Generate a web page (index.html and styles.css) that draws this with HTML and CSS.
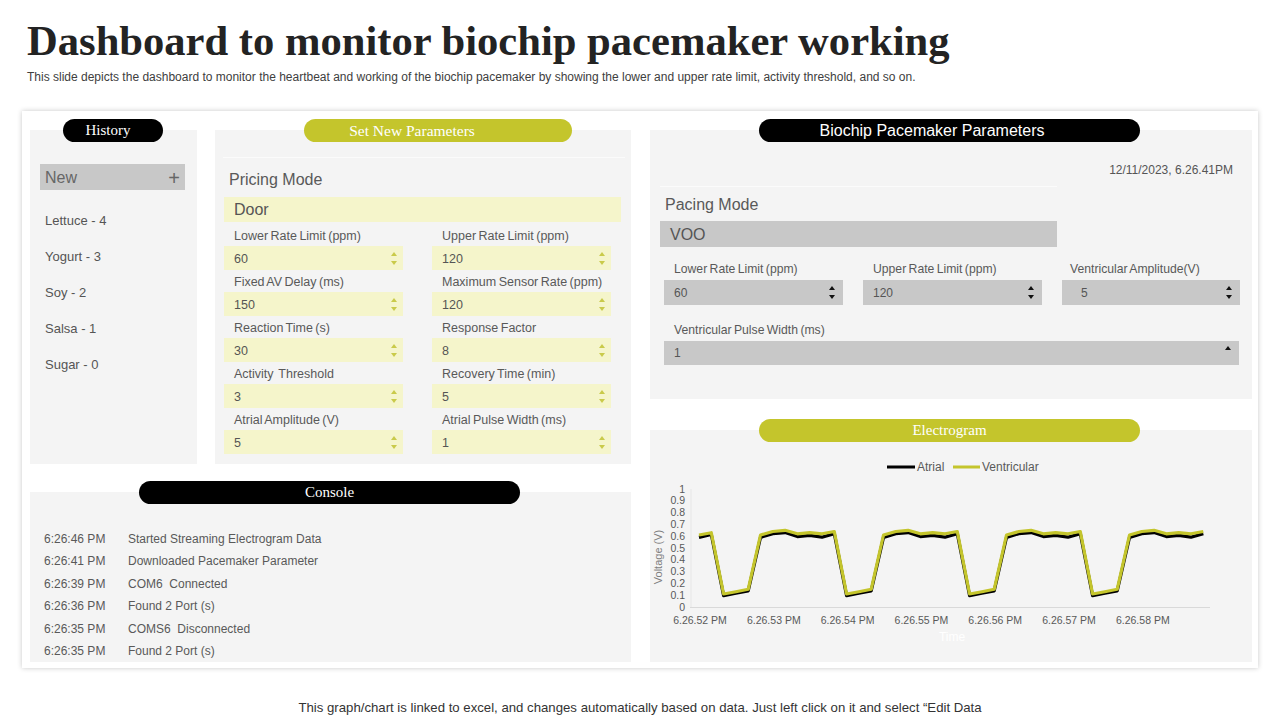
FILE: index.html
```html
<!DOCTYPE html>
<html lang="en">
<head>
<meta charset="utf-8">
<title>Dashboard to monitor biochip pacemaker working</title>
<link rel="stylesheet" href="styles.css">
</head>
<body>
<header class="head">
  <h1 class="title">Dashboard to monitor biochip pacemaker working</h1>
  <p class="subtitle">This slide depicts the dashboard to monitor the heartbeat and working of the biochip pacemaker by showing the lower and upper rate limit, activity threshold, and so on.</p>
</header>

<main class="frame">
  <div class="col-left">
    <div class="row-top">
      <section class="panel history">
        <div class="pill pill-dark pill-history">History</div>
        <div class="new-bar"><span>New</span><span class="plus">+</span></div>
        <ul class="hist-list">
          <li>Lettuce - 4</li>
          <li>Yogurt - 3</li>
          <li>Soy - 2</li>
          <li>Salsa - 1</li>
          <li>Sugar - 0</li>
        </ul>
      </section>

      <section class="panel setnew">
        <div class="pill pill-olive pill-setnew">Set New Parameters</div>
        <div class="divider divider-setnew"></div>
        <div class="mode-label">Pricing Mode</div>
        <div class="mode-bar mode-yellow">Door</div>
        <div class="fields">
          <div class="field"><div class="flabel">Lower Rate Limit (ppm)</div><div class="fbox"><span>60</span><span class="spin"><i class="up"></i><i class="down"></i></span></div></div>
          <div class="field"><div class="flabel">Upper Rate Limit (ppm)</div><div class="fbox"><span>120</span><span class="spin"><i class="up"></i><i class="down"></i></span></div></div>
          <div class="field"><div class="flabel">Fixed AV Delay (ms)</div><div class="fbox"><span>150</span><span class="spin"><i class="up"></i><i class="down"></i></span></div></div>
          <div class="field"><div class="flabel">Maximum Sensor Rate (ppm)</div><div class="fbox"><span>120</span><span class="spin"><i class="up"></i><i class="down"></i></span></div></div>
          <div class="field"><div class="flabel">Reaction Time (s)</div><div class="fbox"><span>30</span><span class="spin"><i class="up"></i><i class="down"></i></span></div></div>
          <div class="field"><div class="flabel">Response Factor</div><div class="fbox"><span>8</span><span class="spin"><i class="up"></i><i class="down"></i></span></div></div>
          <div class="field"><div class="flabel">Activity&nbsp; Threshold</div><div class="fbox"><span>3</span><span class="spin"><i class="up"></i><i class="down"></i></span></div></div>
          <div class="field"><div class="flabel">Recovery Time (min)</div><div class="fbox"><span>5</span><span class="spin"><i class="up"></i><i class="down"></i></span></div></div>
          <div class="field"><div class="flabel">Atrial Amplitude (V)</div><div class="fbox"><span>5</span><span class="spin"><i class="up"></i><i class="down"></i></span></div></div>
          <div class="field"><div class="flabel">Atrial Pulse Width (ms)</div><div class="fbox"><span>1</span><span class="spin"><i class="up"></i><i class="down"></i></span></div></div>
        </div>
      </section>
    </div>

    <section class="panel console">
      <div class="pill pill-dark pill-wide">Console</div>
      <div class="log">
        <div class="log-row"><span class="log-time">6:26:46 PM</span><span>Started Streaming Electrogram Data</span></div>
        <div class="log-row"><span class="log-time">6:26:41 PM</span><span>Downloaded Pacemaker Parameter</span></div>
        <div class="log-row"><span class="log-time">6:26:39 PM</span><span>COM6&nbsp; Connected</span></div>
        <div class="log-row"><span class="log-time">6:26:36 PM</span><span>Found 2 Port (s)</span></div>
        <div class="log-row"><span class="log-time">6:26:35 PM</span><span>COMS6&nbsp; Disconnected</span></div>
        <div class="log-row"><span class="log-time">6:26:35 PM</span><span>Found 2 Port (s)</span></div>
      </div>
    </section>
  </div>

  <div class="col-right">
    <section class="panel biochip">
      <div class="pill pill-dark pill-wide pill-sans">Biochip Pacemaker Parameters</div>
      <div class="date">12/11/2023, 6.26.41PM</div>
      <div class="divider divider-bio"></div>
      <div class="mode-label mode-label-bio">Pacing Mode</div>
      <div class="mode-bar mode-gray">VOO</div>
      <div class="bfields">
        <div class="field"><div class="flabel">Lower Rate Limit (ppm)</div><div class="fbox gbox"><span>60</span><span class="spin spin-dark"><i class="up"></i><i class="down"></i></span></div></div>
        <div class="field"><div class="flabel">Upper Rate Limit (ppm)</div><div class="fbox gbox"><span>120</span><span class="spin spin-dark"><i class="up"></i><i class="down"></i></span></div></div>
        <div class="field field-amp"><div class="flabel">Ventricular Amplitude(V)</div><div class="fbox gbox"><span class="amp-val">5</span><span class="spin spin-dark"><i class="up"></i><i class="down"></i></span></div></div>
      </div>
      <div class="field field-full">
        <div class="flabel">Ventricular Pulse Width (ms)</div>
        <div class="fbox gbox fbox-tall"><span>1</span><span class="spin spin-dark"><i class="up"></i></span></div>
      </div>
    </section>

    <section class="panel electro">
      <div class="pill pill-olive pill-wide">Electrogram</div>
      <svg class="chart" width="602" height="220" viewBox="0 0 602 220">
        <line x1="237" y1="25" x2="265" y2="25" stroke="#000" stroke-width="3"/>
        <text x="267" y="29" class="lg">Atrial</text>
        <line x1="303" y1="25" x2="330" y2="25" stroke="#c4c52c" stroke-width="3"/>
        <text x="332" y="29" class="lg">Ventricular</text>

        <text x="35" y="50.5" class="yl">1</text>
        <text x="35" y="62.3" class="yl">0.9</text>
        <text x="35" y="74.1" class="yl">0.8</text>
        <text x="35" y="85.9" class="yl">0.7</text>
        <text x="35" y="97.7" class="yl">0.6</text>
        <text x="35" y="109.5" class="yl">0.5</text>
        <text x="35" y="121.3" class="yl">0.4</text>
        <text x="35" y="133.1" class="yl">0.3</text>
        <text x="35" y="144.9" class="yl">0.2</text>
        <text x="35" y="156.7" class="yl">0.1</text>
        <text x="35" y="168.5" class="yl">0</text>

        <text x="12" y="115" class="ytitle" transform="rotate(-90 12 115)">Voltage (V)</text>

        <line x1="41" y1="47" x2="41" y2="165" stroke="#e6e6e6" stroke-width="1"/>
        <line x1="40" y1="165.5" x2="560" y2="165.5" stroke="#d9d9d9" stroke-width="1"/>

        <polyline fill="none" stroke="#000" stroke-width="3.2" stroke-linejoin="round"
          points="49,95.4 61.3,92.5 73.6,153.6 85.9,151.2 98.2,149 110.5,95.4 122.8,91.6 135.1,90.6 147.4,94.6 159.7,93.4 172,95.2 184.3,91.6 196.6,153.6 208.9,151.2 221.2,149 233.5,95.4 245.8,91.6 258.1,90.6 270.4,94.6 282.7,93.4 295,95.2 307.3,91.6 319.6,153.6 331.9,151.2 344.2,149 356.5,95.4 368.8,91.6 381.1,90.6 393.4,94.6 405.7,93.4 418,95.2 430.3,91.6 442.6,153.6 454.9,151.2 467.2,149 479.5,95.4 491.8,91.6 504.1,90.6 516.4,94.6 528.7,93.4 541,95.2 553.3,91.6"/>
        <polyline fill="none" stroke="#c4c52c" stroke-width="3.2" stroke-linejoin="round"
          points="49,93 61.3,90.7 73.6,152 85.9,149.7 98.2,147.3 110.5,93 122.8,89.5 135.1,88.3 147.4,91.8 159.7,90.7 172,91.8 184.3,89.5 196.6,152 208.9,149.7 221.2,147.3 233.5,93 245.8,89.5 258.1,88.3 270.4,91.8 282.7,90.7 295,91.8 307.3,89.5 319.6,152 331.9,149.7 344.2,147.3 356.5,93 368.8,89.5 381.1,88.3 393.4,91.8 405.7,90.7 418,91.8 430.3,89.5 442.6,152 454.9,149.7 467.2,147.3 479.5,93 491.8,89.5 504.1,88.3 516.4,91.8 528.7,90.7 541,91.8 553.3,89.5"/>

        <text x="50" y="182" class="xl">6.26.52 PM</text>
        <text x="123.8" y="182" class="xl">6.26.53 PM</text>
        <text x="197.6" y="182" class="xl">6.26.54 PM</text>
        <text x="271.4" y="182" class="xl">6.26.55 PM</text>
        <text x="345.2" y="182" class="xl">6.26.56 PM</text>
        <text x="419" y="182" class="xl">6.26.57 PM</text>
        <text x="492.8" y="182" class="xl">6.26.58 PM</text>

        <text x="302" y="199" class="xtitle">Time</text>
      </svg>
    </section>
  </div>
</main>

<footer class="foot">This graph/chart is linked to excel, and changes automatically based on data. Just left click on it and select “Edit Data</footer>
</body>
</html>
```

FILE: styles.css
```css
* { box-sizing: border-box; }

html, body {
  margin: 0;
  padding: 0;
  background: #ffffff;
}

body {
  width: 1280px;
  height: 720px;
  overflow: hidden;
  font-family: "Liberation Sans", Arial, sans-serif;
  color: #555555;
}

.head {
  padding-left: 27px;
  padding-top: 16px;
}

.title {
  margin: 0;
  font-family: "Liberation Serif", "Times New Roman", serif;
  font-weight: bold;
  font-size: 42.6px;
  line-height: 49px;
  color: #232323;
  white-space: nowrap;
}

.subtitle {
  margin: 5px 0 0 0;
  font-size: 12px;
  line-height: 14px;
  color: #404040;
  white-space: nowrap;
}

.frame {
  margin: 27px 0 0 22px;
  width: 1236px;
  height: 557px;
  padding: 19px 6px 6px 8px;
  background: #ffffff;
  box-shadow: 0 0 5px rgba(0, 0, 0, 0.22);
  display: flex;
  gap: 19px;
}

.col-left {
  width: 601px;
  display: flex;
  flex-direction: column;
  gap: 28px;
}

.row-top {
  height: 334px;
  display: flex;
  gap: 18px;
}

.col-right {
  width: 602px;
  display: flex;
  flex-direction: column;
  gap: 31px;
}

.panel {
  background: #f4f4f4;
  display: flex;
  flex-direction: column;
  align-items: flex-start;
}

.pill {
  margin-top: -11px;
  height: 23px;
  border-radius: 12px;
  color: #ffffff;
  font-family: "Liberation Serif", "Times New Roman", serif;
  font-size: 15px;
  line-height: 23px;
  text-align: center;
  flex-shrink: 0;
}

.pill-dark { background: #000000; }
.pill-olive { background: #c4c52c; }

.pill-history { width: 100px; margin-left: 33px; padding-right: 10px; }
.pill-setnew { width: 268px; margin-left: 89px; font-size: 15.5px; padding-right: 52px; }
.pill-wide { width: 381px; margin-left: 109px; }
.pill-sans {
  font-family: "Liberation Sans", Arial, sans-serif;
  font-size: 16px;
  padding-right: 35px;
}

/* History */
.history { width: 167px; }

.new-bar {
  margin: 22px 0 0 10px;
  width: 145px;
  height: 26px;
  background: #c8c8c8;
  display: flex;
  justify-content: space-between;
  align-items: center;
  padding: 1px 5px 0 5px;
  font-size: 16px;
  color: #666666;
}

.plus {
  font-size: 20px;
  line-height: 20px;
  color: #666666;
}

.hist-list {
  list-style: none;
  margin: 13px 0 0 0;
  padding: 0 0 0 15px;
}

.hist-list li {
  font-size: 13px;
  line-height: 36px;
  color: #555555;
}

/* Set new parameters */
.setnew { width: 416px; }

.divider {
  height: 1px;
  background: #fbfbfb;
}

.divider-setnew {
  margin: 15px 0 0 8px;
  width: 402px;
}

.mode-label {
  margin: 10px 0 0 14px;
  font-size: 16px;
  line-height: 24px;
  color: #595959;
}

.mode-bar {
  margin: 5px 0 0 9px;
  width: 397px;
  height: 25px;
  padding-left: 10px;
  font-size: 16px;
  line-height: 26px;
  color: #555555;
}

.mode-yellow { background: #f5f5cb; }

.fields {
  margin: 3px 0 0 9px;
  display: grid;
  grid-template-columns: 179px 179px;
  column-gap: 29px;
  row-gap: 1px;
}

.flabel {
  height: 21px;
  line-height: 22px;
  padding-left: 10px;
  font-size: 12.5px;
  word-spacing: -1px;
  color: #595959;
  white-space: nowrap;
}

.fbox {
  height: 24px;
  background: #f5f5cb;
  display: flex;
  justify-content: space-between;
  align-items: center;
  padding: 1px 6px 0 10px;
  font-size: 12.5px;
  color: #555555;
}

.spin {
  display: flex;
  flex-direction: column;
  gap: 5px;
}

.spin i {
  display: block;
  width: 0;
  height: 0;
  border-left: 3.5px solid transparent;
  border-right: 3.5px solid transparent;
}

.spin .up { border-bottom: 4px solid #c9ca4a; }
.spin .down { border-top: 4px solid #c9ca4a; }

.spin-dark .up { border-bottom-color: #111111; }
.spin-dark .down { border-top-color: #111111; }

/* Biochip */
.biochip { height: 269px; }

.date {
  align-self: stretch;
  margin-top: 20px;
  padding-right: 19px;
  text-align: right;
  font-size: 12px;
  line-height: 16px;
  color: #555555;
}

.divider-bio {
  margin: 8px 0 0 10px;
  width: 397px;
}

.mode-label-bio {
  margin: 6px 0 0 15px;
}

.mode-gray {
  margin: 4px 0 0 10px;
  height: 26px;
  line-height: 28px;
  background: #c8c8c8;
}

.bfields {
  margin: 11px 0 0 14px;
  display: grid;
  grid-template-columns: 179px 179px 178px;
  column-gap: 20px;
}

.biochip .flabel {
  height: 22px;
  line-height: 23px;
  font-size: 12.2px;
}

.field-amp .flabel { padding-left: 8px; }

.gbox {
  background: #c8c8c8;
  height: 25px;
  font-size: 12px;
  padding: 0 8px 0 10px;
}

.amp-val { padding-left: 9px; }

.field-full {
  margin: 14px 0 0 14px;
  width: 575px;
}

.fbox-tall {
  height: 24px;
  align-items: flex-start;
  padding-top: 5px;
}

/* Electrogram */
.electro { height: 232px; }

.chart {
  display: block;
  font-family: "Liberation Sans", Arial, sans-serif;
}

.chart .lg { font-size: 12px; fill: #595959; }
.chart .yl { font-size: 10.5px; fill: #595959; text-anchor: end; }
.chart .xl { font-size: 10.5px; fill: #595959; text-anchor: middle; }
.chart .ytitle { font-size: 11px; fill: #7f7f7f; text-anchor: middle; }
.chart .xtitle { font-size: 12px; fill: #ffffff; text-anchor: middle; }

/* Console */
.console { height: 170px; }

.log {
  margin-top: 24px;
  padding-left: 14px;
}

.log-row {
  display: flex;
  font-size: 12px;
  line-height: 22.4px;
  color: #595959;
  white-space: nowrap;
}

.log-time { width: 84px; }

.foot {
  margin-top: 32px;
  text-align: center;
  font-size: 13.2px;
  line-height: 16px;
  color: #333333;
  white-space: nowrap;
}
```
